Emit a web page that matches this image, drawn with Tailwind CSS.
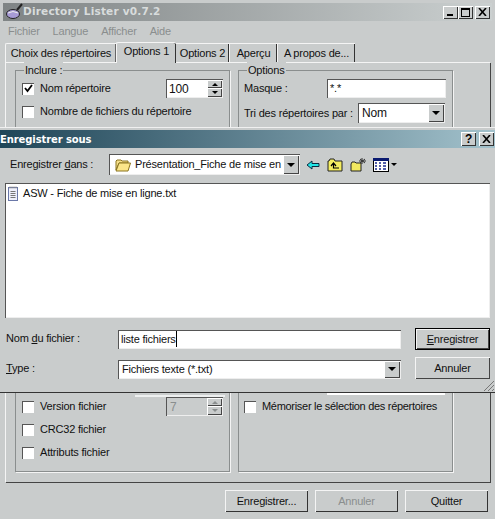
<!DOCTYPE html>
<html lang="fr">
<head>
<meta charset="UTF-8">
<title>Directory Lister</title>
<script src="https://cdn.jsdelivr.net/npm/@tailwindcss/browser@4"></script>
</head>
<body class="m-0 bg-[#c9cccc]">
<div class="relative w-[495px] h-[519px] overflow-hidden bg-[#c9cccc] font-['Liberation_Sans',sans-serif] text-[11px] tracking-[-0.2px] text-[#111] flex flex-col pt-[3px]">

  <!-- main window title -->
  <div class="h-[18px] mx-[3px] shrink-0 flex items-center bg-gradient-to-r from-[#7f8485] to-[#cbd0d0] pl-[2px] pr-[2px]">
    <svg width="18" height="18" viewBox="0 0 18 18" class="shrink-0">
      <ellipse cx="8" cy="11" rx="6.5" ry="4.5" fill="#a79bd6" stroke="#222"/>
      <path d="M12 7 L17 1" stroke="#222" stroke-width="2"/>
      <path d="M3 10 Q8 7 13 10" stroke="#eee" fill="none"/>
    </svg>
    <span class="ml-[0px] font-['DejaVu_Sans',sans-serif] font-bold text-[10.5px] tracking-[0.2px] text-[#d8dcdc]">Directory Lister v0.7.2</span>
    <div class="ml-auto flex">
      <div class="w-[15px] h-[13px] bg-[#c9cccc] shadow-[inset_1px_1px_0_#fff,inset_-1px_-1px_0_#333] relative"><div class="absolute left-[4px] bottom-[3px] w-[6px] h-[2px] bg-black"></div></div>
      <div class="w-[15px] h-[13px] bg-[#c9cccc] shadow-[inset_1px_1px_0_#fff,inset_-1px_-1px_0_#333] relative"><div class="absolute left-[3px] top-[2px] w-[9px] h-[9px] border border-black border-t-2"></div></div>
      <div class="ml-[2px] w-[15px] h-[13px] bg-[#c9cccc] shadow-[inset_1px_1px_0_#fff,inset_-1px_-1px_0_#333] flex items-center justify-center">
        <svg width="9" height="8" viewBox="0 0 9 8"><path d="M1 0 L8 8 M8 0 L1 8" stroke="#000" stroke-width="1.6"/></svg>
      </div>
    </div>
  </div>

  <!-- menu -->
  <div class="h-[20px] shrink-0 flex items-center gap-[13px] pl-[8px] text-[#8a8e8e]">
    <span>Fichier</span><span>Langue</span><span>Afficher</span><span>Aide</span>
  </div>

  <!-- tabs -->
  <div class="h-[21px] shrink-0 flex items-end pl-[5px] relative z-10">
    <div class="w-[111px] h-[19px] flex items-center justify-center border-t border-l border-[#f4f4f4] rounded-tl-[2px] shadow-[inset_-1px_0_0_#666]">Choix des répertoires</div>
    <div class="w-[60px] h-[21px] -mb-px flex items-center justify-center bg-[#c9cccc] border-t border-l border-[#f4f4f4] rounded-t-[2px] shadow-[inset_-1px_0_0_#333] pb-[3px]">Options 1</div>
    <div class="w-[53px] h-[19px] flex items-center justify-center border-t border-[#f4f4f4] shadow-[inset_-1px_0_0_#333]">Options 2</div>
    <div class="w-[48px] h-[19px] flex items-center justify-center border-t border-l border-[#f4f4f4] shadow-[inset_-1px_0_0_#333]">Aperçu</div>
    <div class="w-[78px] h-[19px] flex items-center justify-center border-t border-l border-[#f4f4f4] shadow-[inset_-1px_0_0_#333]">A propos de...</div>
  </div>

  <!-- tab pane -->
  <div class="h-[420px] shrink-0 ml-[5px] w-[485px] border-t border-l border-[#f4f4f4] shadow-[1px_1px_0_#444] flex gap-[8px] pl-[9px] pt-[7px]">
    <!-- Inclure -->
    <div class="relative w-[215px] h-[402px] border border-[#8a8e8e] shadow-[1px_1px_0_#f4f4f4] flex flex-col justify-between px-[6px] pt-[6px] pb-[7px]">
      <span class="absolute -top-[9px] left-[8px] px-[1px] bg-[#c9cccc]">Inclure :</span>
      <div class="flex flex-col">
        <div class="h-[23px] flex items-center">
          <div class="w-[12px] h-[12px] bg-white shadow-[inset_1px_1px_0_#555] flex items-center justify-center">
            <svg width="9" height="9" viewBox="0 0 9 9"><path d="M1 4 L3.5 7 L8 1" stroke="#000" stroke-width="1.8" fill="none"/></svg>
          </div>
          <span class="ml-[6px]">Nom répertoire</span>
          <div class="ml-auto w-[57px] h-[19px] bg-white shadow-[inset_1px_1px_0_#555,inset_-1px_-1px_0_#eee] flex items-center pl-[3px] relative text-[12px]">100
            <div class="absolute right-[1px] top-[1px] w-[15px] h-[17px] flex flex-col bg-[#c9cccc]">
              <div class="h-[8px] shadow-[inset_1px_1px_0_#fff,inset_-1px_-1px_0_#444] flex items-center justify-center"><div class="w-0 h-0 border-x-[3px] border-x-transparent border-b-[3px] border-b-black"></div></div>
              <div class="h-[9px] shadow-[inset_1px_1px_0_#fff,inset_-1px_-1px_0_#444] flex items-center justify-center"><div class="w-0 h-0 border-x-[3px] border-x-transparent border-t-[3px] border-t-black"></div></div>
            </div>
          </div>
        </div>
        <div class="h-[23px] flex items-center">
          <div class="w-[12px] h-[12px] bg-white shadow-[inset_1px_1px_0_#555]"></div>
          <span class="ml-[6px]">Nombre de fichiers du répertoire</span>
        </div>
      </div>
      <!-- bottom of a control mostly hidden by the dialog -->
      <div class="absolute left-[119px] top-[320px] w-[90px] h-[6px] border-b-2 border-[#eef0f0]"></div>
      <div class="flex flex-col">
        <div class="h-[23px] flex items-center">
          <div class="w-[12px] h-[12px] bg-white shadow-[inset_1px_1px_0_#555]"></div>
          <span class="ml-[6px]">Version fichier</span>
          <div class="ml-auto w-[57px] h-[19px] shadow-[inset_1px_1px_0_#555,inset_-1px_-1px_0_#eee] flex items-center pl-[4px] relative text-[12px] text-[#8a8e8e]">7
            <div class="absolute right-[1px] top-[1px] w-[15px] h-[17px] flex flex-col bg-[#c9cccc]">
              <div class="h-[8px] shadow-[inset_1px_1px_0_#fff,inset_-1px_-1px_0_#444] flex items-center justify-center"><div class="w-0 h-0 border-x-[3px] border-x-transparent border-b-[3px] border-b-[#8a8e8e]"></div></div>
              <div class="h-[9px] shadow-[inset_1px_1px_0_#fff,inset_-1px_-1px_0_#444] flex items-center justify-center"><div class="w-0 h-0 border-x-[3px] border-x-transparent border-t-[3px] border-t-[#8a8e8e]"></div></div>
            </div>
          </div>
        </div>
        <div class="h-[23px] flex items-center">
          <div class="w-[12px] h-[12px] bg-white shadow-[inset_1px_1px_0_#555]"></div>
          <span class="ml-[6px]">CRC32 fichier</span>
        </div>
        <div class="h-[23px] flex items-center">
          <div class="w-[12px] h-[12px] bg-white shadow-[inset_1px_1px_0_#555]"></div>
          <span class="ml-[6px]">Attributs fichier</span>
        </div>
      </div>
    </div>
    <!-- Options -->
    <div class="relative w-[215px] h-[402px] border border-[#8a8e8e] shadow-[1px_1px_0_#f4f4f4] flex flex-col justify-between px-[5px] pt-[8px] pb-[53px]">
      <span class="absolute -top-[9px] left-[8px] px-[1px] bg-[#c9cccc]">Options</span>
      <div class="flex flex-col gap-[5px]">
        <div class="h-[19px] flex items-center">
          <span>Masque :</span>
          <div class="ml-auto mr-[1px] w-[119px] h-[19px] bg-white shadow-[inset_1px_1px_0_#555,inset_-1px_-1px_0_#eee] pl-[3px] pt-[1px]">*.*</div>
        </div>
        <div class="h-[20px] flex items-center">
          <span>Tri des répertoires par :</span>
          <div class="ml-auto mr-[2px] w-[87px] h-[20px] bg-white shadow-[inset_1px_1px_0_#555,inset_-1px_-1px_0_#eee] flex items-center pl-[4px] relative text-[12px]">Nom
            <div class="absolute right-[1px] top-[1px] w-[16px] h-[18px] bg-[#c9cccc] shadow-[inset_1px_1px_0_#fff,inset_-1px_-1px_0_#444] flex items-center justify-center"><div class="w-0 h-0 border-x-[4px] border-x-transparent border-t-[4px] border-t-black"></div></div>
          </div>
        </div>
      </div>
      <!-- bottom of a combo mostly hidden by the dialog -->
      <div class="absolute left-[88px] top-[318px] w-[118px] h-[6px] bg-white"><div class="absolute right-0 top-0 w-[16px] h-[3px] bg-[#555]"></div></div>
      <div class="h-[23px] flex items-center">
        <div class="w-[12px] h-[12px] bg-white shadow-[inset_1px_1px_0_#555]"></div>
        <span class="ml-[6px] tracking-[-0.3px]">Mémoriser le sélection des répertoires</span>
      </div>
    </div>
  </div>

  <!-- bottom buttons -->
  <div class="flex justify-end gap-[7px] pr-[7px] pt-[8px]">
    <div class="w-[83px] h-[22px] flex items-center justify-center shadow-[inset_1px_1px_0_#f4f4f4,inset_-1px_-1px_0_#333]">Enregistrer...</div>
    <div class="w-[83px] h-[22px] flex items-center justify-center text-[#8a8e8e] shadow-[inset_1px_1px_0_#f4f4f4,inset_-1px_-1px_0_#333]">Annuler</div>
    <div class="w-[83px] h-[22px] flex items-center justify-center shadow-[inset_1px_1px_0_#f4f4f4,inset_-1px_-1px_0_#333]">Quitter</div>
  </div>

  <!-- save dialog floating over the window -->
  <div class="absolute left-0 top-[127px] w-[495px] h-[265px] z-20 bg-[#c9cccc] border-t border-[#f0f0f0] shadow-[0_1px_0_#333] pt-[2px] flex flex-col">
    <div class="h-[18px] shrink-0 flex items-center bg-gradient-to-r from-[#1f4658] to-[#a3c2cc]">
      <span class="font-['DejaVu_Sans',sans-serif] font-bold text-[10px] tracking-[-0.1px] text-white">Enregistrer sous</span>
      <div class="ml-auto flex gap-[3px] pr-[1px]">
        <div class="w-[15px] h-[14px] bg-[#c9cccc] shadow-[inset_1px_1px_0_#fff,inset_-1px_-1px_0_#333] flex items-center justify-center font-bold text-[12px] leading-none text-black">?</div>
        <div class="w-[15px] h-[14px] bg-[#c9cccc] shadow-[inset_1px_1px_0_#fff,inset_-1px_-1px_0_#333] flex items-center justify-center">
          <svg width="9" height="8" viewBox="0 0 9 8"><path d="M1 0 L8 8 M8 0 L1 8" stroke="#000" stroke-width="1.6"/></svg>
        </div>
      </div>
    </div>

    <!-- look-in row -->
    <div class="h-[21px] mt-[6px] shrink-0 flex items-center pl-[10px]">
      <span class="w-[99px]">Enregistrer <u>d</u>ans :</span>
      <div class="w-[191px] h-[21px] bg-white shadow-[inset_1px_1px_0_#555,inset_-1px_-1px_0_#eee] flex items-center pl-[6px] relative overflow-hidden whitespace-nowrap">
        <svg width="16" height="14" viewBox="0 0 16 14" class="shrink-0">
          <path d="M1 12 V3 L2 2 H6 L7 3 H13 V5 H4 L1 12 Z" fill="#f6e08a" stroke="#8a7420"/>
          <path d="M1 13 L4 5 H15.5 L13 13 Z" fill="#fbe68a" stroke="#8a7420"/>
        </svg>
        <span class="ml-[4px]">Présentation_Fiche de mise en</span>
        <div class="absolute right-[1px] top-[1px] w-[16px] h-[19px] bg-[#c9cccc] shadow-[inset_1px_1px_0_#fff,inset_-1px_-1px_0_#444] flex items-center justify-center"><div class="w-0 h-0 border-x-[4px] border-x-transparent border-t-[4px] border-t-black"></div></div>
      </div>
      <svg width="14" height="10" viewBox="0 0 14 10" class="ml-[6px]"><path d="M1 5 L6 1 V3.5 H13 V6.5 H6 V9 Z" fill="#22e6e6" stroke="#0a2a40"/></svg>
      <svg width="16" height="14" viewBox="0 0 16 14" class="ml-[7px]">
        <path d="M1 13 V3 H2 L3 1 H7 L8 3 H15 V13 Z" fill="#f5ee60" stroke="#222"/>
        <path d="M4 8 L6.5 5 L9 8 M6.5 5 V10 H12" stroke="#000" fill="none" stroke-width="1.2"/>
      </svg>
      <svg width="17" height="15" viewBox="0 0 17 15" class="ml-[7px]">
        <path d="M1 14 V7 L2 5 H5 L6 6 H11 V14 Z" fill="#f2e860" stroke="#222"/>
        <path d="M12 1 V7 M9 4 H16 M10 2 L15 6 M15 2 L10 6" stroke="#333"/>
      </svg>
      <svg width="16" height="14" viewBox="0 0 16 14" class="ml-[6px]">
        <rect x="0.5" y="0.5" width="15" height="13" fill="#fff" stroke="#000"/>
        <rect x="0" y="0" width="16" height="3" fill="#0a1a70"/>
        <path d="M2 5 H4 M6 5 H8 M10 5 H13 M2 8 H4 M6 8 H8 M10 8 H13 M2 11 H4 M6 11 H8 M10 11 H13" stroke="#1a2a90" stroke-width="1.4"/>
      </svg>
      <div class="ml-[2px] w-0 h-0 border-x-[3px] border-x-transparent border-t-[3px] border-t-black"></div>
    </div>

    <!-- file list -->
    <div class="mt-[8px] ml-[5px] w-[485px] h-[135px] shrink-0 bg-white shadow-[inset_1px_1px_0_#555,inset_-1px_-1px_0_#eee] pl-[2px] pt-[2px] flex items-start">
      <div class="flex items-center h-[16px]">
        <svg width="12" height="15" viewBox="0 0 12 15" class="shrink-0">
          <rect x="1.5" y="1.5" width="9" height="13" fill="#eef0fc" stroke="#6a78a8"/>
          <path d="M3 0.5 V2.5 M5 0.5 V2.5 M7 0.5 V2.5 M9 0.5 V2.5" stroke="#888"/>
          <path d="M3.5 5.5 H8.5 M3.5 7.5 H8.5 M3.5 9.5 H8.5 M3.5 11.5 H8.5" stroke="#777"/>
        </svg>
        <span class="ml-[4px]">ASW - Fiche de mise en ligne.txt</span>
      </div>
    </div>

    <!-- file name row -->
    <div class="mt-[10px] shrink-0 flex items-center pl-[6px] h-[22px]">
      <span class="w-[112px] -mt-px">Nom <u>d</u>u fichier :</span>
      <div class="w-[283px] h-[19px] bg-white shadow-[inset_1px_1px_0_#555,inset_-1px_-1px_0_#eee] flex items-center pl-[3px]"><span class="border-r border-black">liste fichiers</span></div>
      <div class="ml-[14px] w-[75px] h-[22px] border border-black bg-[#c9cccc] shadow-[inset_1px_1px_0_#f4f4f4,inset_-1px_-1px_0_#444] flex items-center justify-center"><span><u>E</u>nregistrer</span></div>
    </div>

    <!-- type row -->
    <div class="mt-[7px] shrink-0 flex items-center pl-[6px] h-[22px]">
      <span class="w-[112px]"><u>T</u>ype :</span>
      <div class="w-[283px] h-[19px] mt-[2px] bg-white shadow-[inset_1px_1px_0_#555,inset_-1px_-1px_0_#eee] flex items-center pl-[4px] relative">Fichiers texte (*.txt)
        <div class="absolute right-[1px] top-[1px] w-[16px] h-[17px] bg-[#c9cccc] shadow-[inset_1px_1px_0_#fff,inset_-1px_-1px_0_#444] flex items-center justify-center"><div class="w-0 h-0 border-x-[4px] border-x-transparent border-t-[4px] border-t-black"></div></div>
      </div>
      <div class="ml-[14px] w-[75px] h-[22px] bg-[#c9cccc] shadow-[inset_1px_1px_0_#f4f4f4,inset_-1px_-1px_0_#444] flex items-center justify-center">Annuler</div>
    </div>

    <svg width="12" height="12" viewBox="0 0 12 12" class="absolute right-0 bottom-0"><path d="M11 1 L1 11 M11 5 L5 11 M11 9 L9 11" stroke="#777"/></svg>
  </div>
</div>
</body>
</html>
